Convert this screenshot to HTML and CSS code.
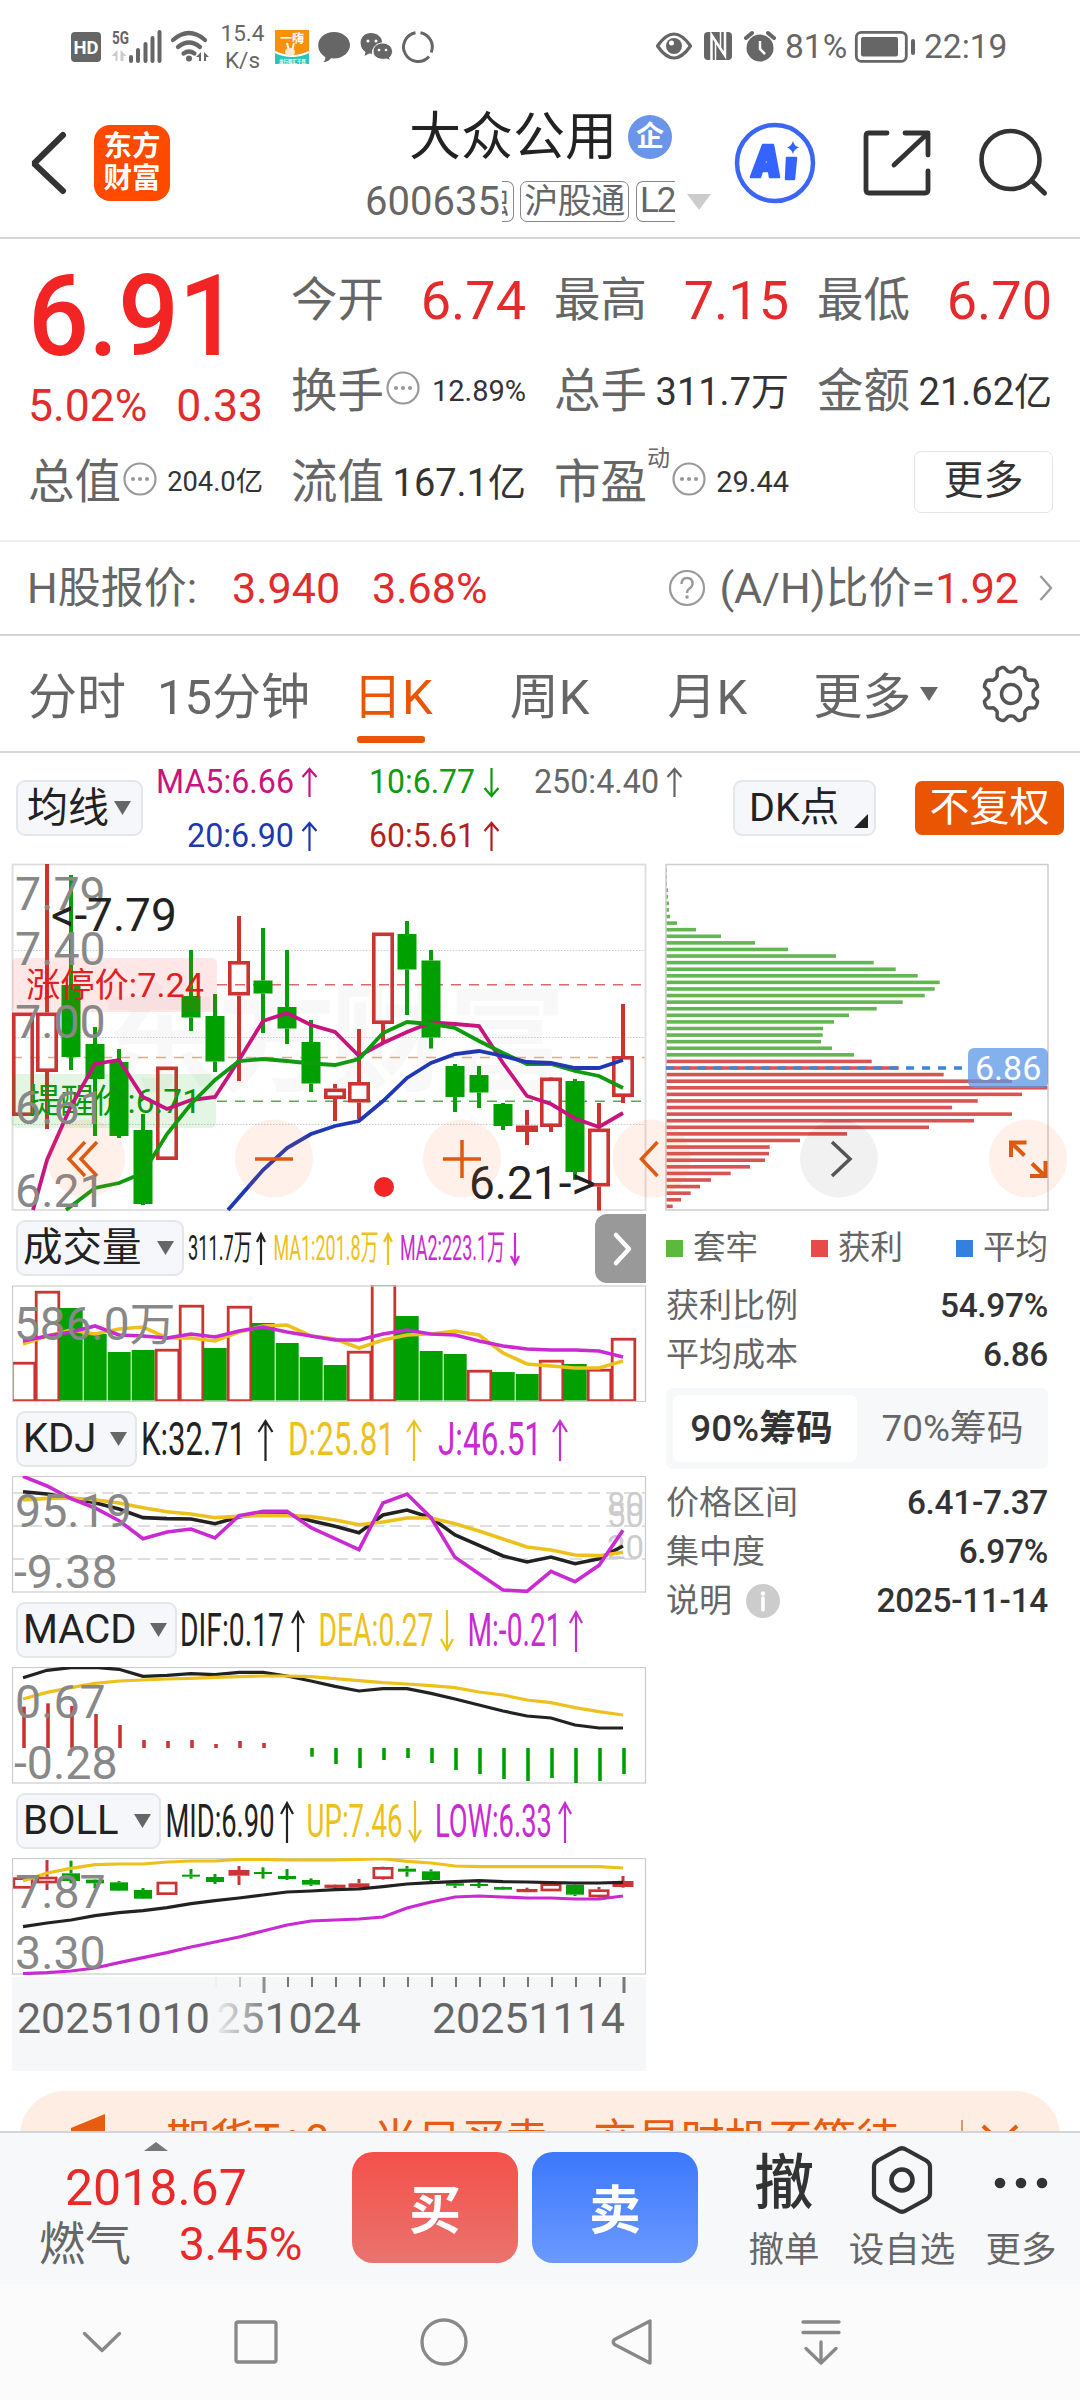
FILE: index.html
```html
<!DOCTYPE html>
<html lang="zh-CN">
<head>
<meta charset="utf-8">
<title>大众公用 600635</title>
<link rel="stylesheet" href="styles.css">
</head>
<body>
<div class="screen">

<div class="status">
  <svg class="st-left" width="144" height="40" viewBox="68 27 144 40">
    <rect x="71" y="32" width="30" height="30" rx="4" fill="#666"/>
    <text x="86" y="54" text-anchor="middle" font-size="19" font-weight="700" fill="#fff" textLength="25" lengthAdjust="spacingAndGlyphs">HD</text>
    <text x="112" y="44" font-size="18" font-weight="700" fill="#666" textLength="17" lengthAdjust="spacingAndGlyphs">5G</text>
    <path d="M117.500 50v11h-2v-5h-4zM120.500 61v-11l6 6h-3v5z" fill="#ccc"/>
    <path d="M131 57v4M138 50v11M145.500 44v17M152.500 38v23M159.500 32v29" stroke="#666" stroke-width="4" stroke-linecap="round"/>
    <path d="M173 40q16-14 32 0M178 47q11-9 22 0M183.500 53.500q5.500-4 11 0" fill="none" stroke="#666" stroke-width="4.200" stroke-linecap="round"/>
    <circle cx="189" cy="58.500" r="3" fill="#666"/>
    <path d="M201 52v9h-2v-4h-3zM204 61v-9l5 5h-3v4z" fill="#666"/>
  </svg>
  <div class="st-speed">15.4<br>K/s</div>
  <svg class="st-apps" width="164" height="40" viewBox="273 27 164 40">
    <rect x="275" y="30" width="34" height="34" fill="#f9900c"/>
    <path d="M275 53q17 7 34 0v11h-34z" fill="#2fc3bb"/>
    <path d="M275 52q17 8 34 0" fill="none" stroke="#fff" stroke-width="2"/>
    <path d="M287 43l2 8M294 43l-2 8" stroke="#fff" stroke-width="2"/>
    <ellipse cx="290" cy="52" rx="5" ry="4" fill="#ffe9d6"/>
    <text x="280" y="43" font-size="12" font-weight="700" fill="#fff">一嗨</text>
    <text x="279" y="62.500" font-size="4.500" font-weight="700" fill="#fff">龙行租汇千民</text>
    <path d="M334 32c9 0 16 6 16 13s-7 13.500-16 13.500l-3-.2c-2 2.500-4 3.700-7.500 3.700 1.500-1.500 2-3 1.700-5-4-2.500-7-6.500-7-11.500 0-8 7-13.500 15.800-13.500z" fill="#666"/>
    <path d="M371 33c6 0 11 4 11 9 0 1-.2 1.500-.4 2-5.600.4-9.600 4-9.600 8.500l.1 1.300-3-.4-4.600 2.600 1-4c-3-2-4.900-5-4.900-9 0-6 4.400-10 10.400-10z" fill="#666"/>
    <path d="M382.500 43c5.500 0 10 3.800 10 8.500 0 2.500-1 4.500-3 6l1 3-4-1.500c-6.500 1.500-13.500-1.500-13.500-7.500 0-4.700 4-8.500 9.500-8.500z" fill="#666" stroke="#fff" stroke-width="1"/>
    <g fill="#fff"><circle cx="368" cy="41" r="1.500"/><circle cx="376" cy="41" r="1.500"/><circle cx="379" cy="50" r="1.300"/><circle cx="386" cy="50" r="1.300"/></g>
    <g fill="none" stroke="#666" stroke-width="3"><path d="M415.500 32.700A14.500 14.500 0 1 0 429 56.500M431.200 52.500A14.500 14.500 0 0 0 420.500 32.700"/></g>
  </svg>
  <div class="st-right">
    <svg width="126" height="40" viewBox="653 27 126 40">
      <path d="M657.500 46q16.500-24 33 0q-16.500 24-33 0z" fill="none" stroke="#666" stroke-width="3.200" stroke-linejoin="round"/>
      <circle cx="674" cy="46" r="8" fill="#666"/><circle cx="671.500" cy="43" r="2.500" fill="#fff"/>
      <rect x="704" y="32" width="28" height="28" rx="4" fill="#666"/>
      <path d="M711.500 60v-25l13.500 20.500V32" fill="none" stroke="#fff" stroke-width="2.500"/>
      <path d="M715.500 61V41M720.500 31v17" stroke="#fff" stroke-width="1.500"/>
      <circle cx="760" cy="48" r="13.500" fill="#666"/>
      <path d="M760 41v8l5 5" stroke="#fff" stroke-width="2.500" fill="none"/>
      <path d="M746 38l6-5M774 38l-6-5" stroke="#666" stroke-width="4" stroke-linecap="round"/>
    </svg>
    <span class="st-pct">81%</span>
    <svg width="62" height="34" viewBox="854 30 62 34">
      <rect x="856.300" y="32.300" width="50" height="29" rx="5" fill="none" stroke="#666" stroke-width="2.800"/>
      <rect x="861" y="37" width="37" height="19.500" rx="2" fill="#666"/>
      <rect x="911" y="39" width="4" height="16" rx="2" fill="#666"/>
    </svg>
    <span class="st-time">22:19</span>
  </div>
</div>

<header class="topbar">
  <svg class="back" width="40" height="68" viewBox="30 129 40 68"><path d="M63 135L34 163.500 63 191" fill="none" stroke="#333" stroke-width="6" stroke-linejoin="bevel" stroke-linecap="round"/></svg>
  <div class="logo"><span>东方</span><span>财富</span></div>
  <div class="names">
    <div class="name">大众公用<span class="qi">企</span></div>
    <div class="code"><span class="digits">600635</span><span class="tag cut-l"><i>融</i></span><span class="tag mid">沪股通</span><span class="tag cut-r">L2</span><svg width="24" height="16"><path d="M0 0h24L12 16z" fill="#ccc"/></svg></div>
  </div>
  <svg class="actions" width="320" height="90" viewBox="732 118 320 90">
    <circle cx="775" cy="163" r="38" fill="none" stroke="#3b66f5" stroke-width="4.500"/>
    <path fill="#3563ff" stroke="#3563ff" stroke-width="2.500" stroke-linejoin="round" fill-rule="evenodd" d="M763 145h10l6 32h-9l-1-6h-7l-2 6h-9zM767 154l-3 10h4zM787 158h9l-2 21h-8z"/>
    <path d="M793 141q1 5 6 6.500q-5 1.500-6 6.500q-1.500-5-6-6.500q4.500-1.500 6-6.500z" fill="#3563ff"/>
    <path d="M887 133h-18q-3 0-3 3v54q0 3 3 3h56q3 0 3-3v-19M905 133h23v22M926 135L894 165" fill="none" stroke="#333" stroke-width="4.800" stroke-linecap="round" stroke-linejoin="round"/>
    <circle cx="1010.500" cy="160" r="29" fill="none" stroke="#333" stroke-width="4.600"/>
    <path d="M1032 181l12.500 12" stroke="#333" stroke-width="5" stroke-linecap="round"/>
  </svg>
</header>

<section class="quote">
  <div class="lead">
    <div class="price">6.91</div>
    <div class="chg"><span>5.02%</span><span>0.33</span></div>
  </div>
  <div class="cell"><b>今开</b><em>6.74</em></div>
  <div class="cell"><b>最高</b><em>7.15</em></div>
  <div class="cell"><b>最低</b><em>6.70</em></div>
  <div class="cell"><b>换手</b><svg class="dots" viewBox="0 0 36 36"><use href="#dots"/></svg><i class="sm">12.89%</i></div>
  <div class="cell"><b>总手</b><i>311.7万</i></div>
  <div class="cell"><b>金额</b><i>21.62亿</i></div>
  <div class="cell"><b>总值</b><svg class="dots" viewBox="0 0 36 36"><use href="#dots"/></svg><i class="sm xs">204.0亿</i></div>
  <div class="cell"><b>流值</b><i>167.1亿</i></div>
  <div class="cell"><b>市盈</b><sup>动</sup><svg class="dots" viewBox="0 0 36 36"><use href="#dots"/></svg><i class="sm">29.44</i></div>
  <div class="cell"><span class="more">更多</span></div>
</section>
<svg width="0" height="0" class="defs"><defs>
  <g id="dots"><circle cx="18" cy="18" r="15.500" fill="none" stroke="#999" stroke-width="2.200"/><g fill="#999"><circle cx="11" cy="18" r="2.100"/><circle cx="18" cy="18" r="2.100"/><circle cx="25" cy="18" r="2.100"/></g></g>
</defs></svg>

<section class="hshare">
  <span class="g">H股报价:</span><span class="r p1">3.940</span><span class="r p2">3.68%</span>
  <svg class="help" width="38" height="38"><circle cx="19" cy="19" r="17" fill="none" stroke="#999" stroke-width="2.200"/><path d="M13.500 15q0-6 5.500-6t5.500 5.500q0 3-3 5-2.500 1.700-2.500 4.500" fill="none" stroke="#999" stroke-width="2.400"/><circle cx="19" cy="28" r="1.800" fill="#999"/></svg>
  <span class="g">(A/H)比价=</span><span class="r">1.92</span>
  <svg class="chev" width="14" height="28"><path d="M1.500 2L12 14 1.500 26" fill="none" stroke="#999" stroke-width="2.400"/></svg>
</section>

<nav class="tabs">
  <span>分时</span><span>15分钟</span><span class="on">日K</span><span>周K</span><span>月K</span><span>更多</span>
  <svg class="tri" width="18" height="14"><path d="M0 0h18L9 14z" fill="#666"/></svg>
  <svg class="gear" width="62" height="62" viewBox="-31 -31 62 62"><path id="gearPath" fill="none" stroke="#555" stroke-width="3.500" stroke-linejoin="round"/><circle r="9.500" fill="none" stroke="#555" stroke-width="3.500"/></svg>
</nav>

<section class="mabar">
  <span class="drop ma">均线<svg width="17" height="14"><path d="M0 0h17L8.500 14z" fill="#666"/></svg></span>
  <svg class="malegend" width="560" height="110" viewBox="150 753 560 110" font-size="33.500">
    <g fill="#c8147f" stroke="#c8147f"><text x="156" y="793" textLength="138" lengthAdjust="spacingAndGlyphs">MA5:6.66</text><path class="ar" d="M309.500 797v-28m-7 8l7-8l7 8"/></g>
    <g fill="#0f9a0f" stroke="#0f9a0f"><text x="369" y="793" textLength="106" lengthAdjust="spacingAndGlyphs">10:6.77</text><path class="ar" d="M491.500 768v28m-7-8l7 8l7-8"/></g>
    <g fill="#666" stroke="#666"><text x="534" y="793" textLength="125" lengthAdjust="spacingAndGlyphs">250:4.40</text><path class="ar" d="M674.500 797v-28m-7 8l7-8l7 8"/></g>
    <g fill="#1f38ae" stroke="#1f38ae"><text x="187" y="847" textLength="107" lengthAdjust="spacingAndGlyphs">20:6.90</text><path class="ar" d="M309.500 851v-28m-7 8l7-8l7 8"/></g>
    <g fill="#b41e22" stroke="#b41e22"><text x="369" y="847" textLength="106" lengthAdjust="spacingAndGlyphs">60:5.61</text><path class="ar" d="M491.500 851v-28m-7 8l7-8l7 8"/></g>
  </svg>
  <span class="drop dk">DK点<svg width="14" height="14"><path d="M14 0v14H0z" fill="#222"/></svg></span>
  <span class="fq">不复权</span>
</section>

<main class="charts">
  <div class="left">
    <svg class="kline" width="635" height="350" viewBox="12 863 635 350">
      <g class="wm" font-size="118" font-weight="700" fill="#f8f8f8"><text x="100" y="1082">东方</text><text x="330" y="1082">财富</text></g>
      <g stroke="#ccc" stroke-width="1.200" stroke-dasharray="1.500 1.500"><path d="M12 950.500h633M12 1037.500h633M12 1124.500h633"/></g>
      <path d="M217 984.700h428" stroke="#d86a66" stroke-width="1.500" stroke-dasharray="10 8"/>
      <path d="M12 1057.400h633" stroke="#dcae7a" stroke-width="1.500" stroke-dasharray="10 8"/>
      <path d="M217 1101.200h428" stroke="#46b546" stroke-width="1.500" stroke-dasharray="10 8"/>
      <rect x="12.500" y="864.500" width="633" height="345.500" fill="none" stroke="#ddd" stroke-width="1.800"/>
      <g id="kcandles"></g>
      <rect x="12" y="958" width="205" height="54" rx="5" fill="#ff3c3c" opacity=".12"/>
      <rect x="12" y="1074" width="204" height="54" rx="5" fill="#0a0" opacity=".11"/>
      <g font-size="34"><text x="26" y="996.500" fill="#e02020" textLength="178" lengthAdjust="spacingAndGlyphs">涨停价:7.24</text><text x="27" y="1113" fill="#0d960d" textLength="174" lengthAdjust="spacingAndGlyphs">提醒价:6.71</text></g>
      <g id="klines" fill="none" stroke-width="3.800"></g>
      <g font-size="46.500" fill="#888"><text x="15" y="910">7.79</text><text x="15" y="964.500">7.40</text><text x="15" y="1037.500">7.00</text><text x="15" y="1124">6.61</text><text x="15" y="1207">6.21</text></g>
      <g font-size="46" fill="#222"><text x="51" y="931">&lt;-7.79</text><text x="469" y="1199">6.21-&gt;</text></g>
      <circle cx="384" cy="1187" r="10" fill="#f22424"/>
    </svg>

    <div class="ind">
      <span class="drop d1">成交量<svg width="17" height="14"><path d="M0 0h17L8.500 14z" fill="#666"/></svg></span>
      <svg class="leg" width="400" height="74" viewBox="184 1211 400 74" font-size="35">
        <g fill="#222" stroke="#222"><text x="188" y="1260" textLength="64" lengthAdjust="spacingAndGlyphs">311.7万</text><path class="ar" d="M261 1265v-31m-4 8l4-8l4 8"/></g>
        <g fill="#edc11d" stroke="#edc11d"><text x="273.500" y="1260" textLength="105" lengthAdjust="spacingAndGlyphs">MA1:201.8万</text><path class="ar" d="M388 1265v-31m-4 8l4-8l4 8"/></g>
        <g fill="#ca2ad2" stroke="#ca2ad2"><text x="400" y="1260" textLength="105" lengthAdjust="spacingAndGlyphs">MA2:223.1万</text><path class="ar" d="M515 1233v31m-4-8l4 8l4-8"/></g>
      </svg>
      <span class="next"><svg width="20" height="34"><path d="M3 3l13 14L3 31" fill="none" stroke="#fff" stroke-width="4.500" stroke-linecap="round" stroke-linejoin="round"/></svg></span>
    </div>
    <svg class="sub" width="635" height="117" viewBox="12 1285 635 117">
      <g id="vol"></g><rect x="12.500" y="1286" width="633" height="115.500" fill="none" stroke="#ccc" stroke-width="1.200"/>
      <g id="vlines" fill="none" stroke-width="3.600"></g>
      <text x="14" y="1340" font-size="46" fill="#888">586.0万</text>
    </svg>

    <div class="ind">
      <span class="drop d2">KDJ<svg width="17" height="14"><path d="M0 0h17L8.500 14z" fill="#666"/></svg></span>
      <svg class="leg" width="500" height="74" viewBox="136 1402 500 74" font-size="46">
        <g fill="#222" stroke="#222"><text x="140" y="1455" textLength="105" lengthAdjust="spacingAndGlyphs">K:32.71</text><path class="ar" d="M264.500 1461v-40m-7 11l7-11l7 11"/></g>
        <g fill="#edc11d" stroke="#edc11d"><text x="287" y="1455" textLength="107" lengthAdjust="spacingAndGlyphs">D:25.81</text><path class="ar" d="M413 1461v-40m-7 11l7-11l7 11"/></g>
        <g fill="#ca2ad2" stroke="#ca2ad2"><text x="437" y="1455" textLength="104" lengthAdjust="spacingAndGlyphs">J:46.51</text><path class="ar" d="M559 1461v-40m-7 11l7-11l7 11"/></g>
      </svg>
    </div>
    <svg class="sub" width="635" height="117" viewBox="12 1476 635 117">
      <path d="M12 1493h633M12 1526h633M12 1559h633" stroke="#d4d4d4" stroke-width="1.300" stroke-dasharray="12 6"/>
      <rect x="12.500" y="1476.500" width="633" height="115.500" fill="none" stroke="#ccc" stroke-width="1.200"/>
      <g font-size="33" fill="#ccc" text-anchor="end"><text x="644" y="1516">80</text><text x="644" y="1526.500">50</text><text x="644" y="1559">20</text></g>
      <g id="kdj" fill="none" stroke-width="3.600"></g>
      <g font-size="46.500" fill="#888"><text x="15" y="1527">95.19</text><text x="14" y="1587.500">-9.38</text></g>
    </svg>

    <div class="ind">
      <span class="drop d3">MACD<svg width="17" height="14"><path d="M0 0h17L8.500 14z" fill="#666"/></svg></span>
      <svg class="leg" width="440" height="74" viewBox="176 1593 440 74" font-size="46">
        <g fill="#222" stroke="#222"><text x="179" y="1645.500" textLength="104" lengthAdjust="spacingAndGlyphs">DIF:0.17</text><path class="ar" d="M297 1652v-40m-6 11l6-11l6 11"/></g>
        <g fill="#edc11d" stroke="#edc11d"><text x="317.500" y="1645.500" textLength="115" lengthAdjust="spacingAndGlyphs">DEA:0.27</text><path class="ar" d="M446 1610v40m-6-11l6 11l6-11"/></g>
        <g fill="#ca2ad2" stroke="#ca2ad2"><text x="466.500" y="1645.500" textLength="94" lengthAdjust="spacingAndGlyphs">M:-0.21</text><path class="ar" d="M575 1652v-40m-6 11l6-11l6 11"/></g>
      </svg>
    </div>
    <svg class="sub" width="635" height="117" viewBox="12 1667 635 117">
      <rect x="12.500" y="1667.500" width="633" height="115.500" fill="none" stroke="#ccc" stroke-width="1.200"/>
      <g id="macd" fill="none" stroke-width="3.200"></g>
      <g font-size="46.500" fill="#888"><text x="15" y="1718">0.67</text><text x="14" y="1779">-0.28</text></g>
    </svg>

    <div class="ind">
      <span class="drop d4">BOLL<svg width="17" height="14"><path d="M0 0h17L8.500 14z" fill="#666"/></svg></span>
      <svg class="leg" width="440" height="74" viewBox="160 1784 440 74" font-size="46">
        <g fill="#222" stroke="#222"><text x="164.500" y="1836.500" textLength="109" lengthAdjust="spacingAndGlyphs">MID:6.90</text><path class="ar" d="M286 1843v-40m-6 11l6-11l6 11"/></g>
        <g fill="#edc11d" stroke="#edc11d"><text x="305.500" y="1836.500" textLength="96" lengthAdjust="spacingAndGlyphs">UP:7.46</text><path class="ar" d="M414 1801v40m-6-11l6 11l6-11"/></g>
        <g fill="#ca2ad2" stroke="#ca2ad2"><text x="434" y="1836.500" textLength="117" lengthAdjust="spacingAndGlyphs">LOW:6.33</text><path class="ar" d="M564 1843v-40m-6 11l6-11l6 11"/></g>
      </svg>
    </div>
    <svg class="sub" width="635" height="117" viewBox="12 1858 635 117">
      <g id="bcandles"></g>
      <rect x="12.500" y="1858.500" width="633" height="115.500" fill="none" stroke="#ccc" stroke-width="1.200"/>
      <g id="boll" fill="none" stroke-width="3.200"></g>
      <g font-size="46.500" fill="#888"><text x="15" y="1908">7.87</text><text x="15" y="1969">3.30</text></g>
    </svg>

    <svg class="dates" width="634" height="94" viewBox="12 1977 634 94" font-size="42.500" fill="#666">
      <defs><linearGradient id="fade"><stop offset="0" stop-color="#f6f7f9"/><stop offset="1" stop-color="#f6f7f9" stop-opacity="0"/></linearGradient></defs>
      <rect x="12" y="1977" width="634" height="94" fill="#f6f7f9"/>
      <g id="ticks" stroke="#777"></g>
      <text x="168" y="2033" textLength="193" lengthAdjust="spacingAndGlyphs">20251024</text>
      <rect x="12" y="1977" width="201" height="94" fill="#f6f7f9"/>
      <rect x="212.500" y="1977" width="64" height="94" fill="url(#fade)"/>
      <text x="17" y="2033" textLength="193" lengthAdjust="spacingAndGlyphs">20251010</text>
      <text x="432" y="2033" textLength="193" lengthAdjust="spacingAndGlyphs">20251114</text>
    </svg>
  </div>

  <div class="right">
    <svg class="chips" width="384" height="348" viewBox="665 863 384 348">
      <g id="chipbars"></g>
      <rect x="666" y="864.500" width="382" height="345.500" fill="none" stroke="#ccc" stroke-width="1.500"/>
      <path d="M666 1068h297" stroke="#3f83dc" stroke-width="3.600" stroke-dasharray="8 8"/>
      <rect x="968" y="1048" width="80" height="40" rx="6" fill="#5b97e5" opacity=".75"/>
      <text x="975" y="1080" font-size="34" fill="#fff">6.86</text>
    </svg>
    <div class="legend"><span class="lg">套牢</span><span class="lr">获利</span><span class="lb">平均</span></div>
    <div class="kv"><span>获利比例</span><b>54.97%</b></div>
    <div class="kv"><span>平均成本</span><b>6.86</b></div>
    <div class="seg"><span class="act">90%<strong>筹码</strong></span><span>70%筹码</span></div>
    <div class="kv"><span>价格区间</span><b>6.41-7.37</b></div>
    <div class="kv"><span>集中度</span><b>6.97%</b></div>
    <div class="kv"><span>说明</span><svg width="34" height="34"><circle cx="17" cy="17" r="17" fill="#ccc"/><path d="M17 14v12" stroke="#fff" stroke-width="3.600" stroke-linecap="round"/><circle cx="17" cy="9.500" r="2.200" fill="#fff"/></svg><b>2025-11-14</b></div>
  </div>

  <svg class="tools" width="1080" height="84" viewBox="0 1117 1080 84" fill="none" stroke="#de5a12" stroke-width="3.500">
    <g fill="#ff6f26" fill-opacity=".1" stroke="none"><circle cx="86" cy="1158.500" r="39"/><circle cx="274" cy="1158.500" r="39"/><circle cx="462" cy="1158.500" r="39"/><circle cx="651.500" cy="1158.500" r="39"/><circle cx="1028" cy="1158.500" r="39"/></g>
    <circle cx="839" cy="1158.500" r="39" fill="#000" fill-opacity=".055" stroke="none"/>
    <path d="M85 1142l-16 17 16 17M97 1142l-16 17 16 17M255 1159h38M443 1159h38M462 1140v38M657.500 1142l-16 17 16 17"/>
    <path d="M832 1142l18 17-18 17" stroke="#555"/>
    <path d="M1011 1157v-14.500h15.500M1011.500 1143l13 12.500M1045.500 1161v15h-15.500M1045 1176l-13-12.500" stroke-width="4"/>
  </svg>
</main>

<div class="promo">
  <svg width="34" height="56"><path d="M34 0v50L0 24V14z" fill="#e65c10"/></svg>
  <span>期货T+0，当日买卖，交易时机不等待</span>
  <i></i>
  <svg class="px" width="38" height="36"><path d="M2 2l34 32M36 2L2 34" stroke="#e65c10" stroke-width="4"/></svg>
</div>

<footer class="trade">
  <div class="idx">
    <svg width="24" height="9"><path d="M12 0l12 9H0z" fill="#777"/></svg>
    <div class="i1">2018.67</div>
    <div class="i2"><span>燃气</span><b>3.45%</b></div>
  </div>
  <div class="btn buy">买</div>
  <div class="btn sell">卖</div>
  <div class="act che"><strong>撤</strong><span>撤单</span></div>
  <div class="act she"><svg width="66" height="70" viewBox="-33 -35 66 70"><path d="M-4-30.500q4-2.500 8 0L24-19.500q4 2.500 4 6v27q0 3.500-4 6L4 30.500q-4 2.500-8 0L-24 19.500q-4-2.500-4-6v-27q0-3.500 4-6z" fill="none" stroke="#333" stroke-width="4.200"/><circle r="10.500" fill="none" stroke="#333" stroke-width="4.600"/></svg><span>设自选</span></div>
  <div class="act mo"><svg width="60" height="70" viewBox="0 0 60 70"><g fill="#333"><circle cx="9" cy="38" r="5.300"/><circle cx="30" cy="38" r="5.300"/><circle cx="51" cy="38" r="5.300"/></g></svg><span>更多</span></div>
</footer>

<svg class="sysnav" width="1080" height="116" viewBox="0 2284 1080 116" fill="none" stroke="#888" stroke-width="3.300" stroke-linecap="round" stroke-linejoin="round">
  <path d="M84.500 2333.500l17.500 17 17.500-17"/>
  <rect x="236" y="2322" width="40" height="40" rx="2"/>
  <circle cx="444" cy="2342" r="22"/>
  <path d="M650 2321v42l-35.500-18.500q-2.500-2.500 0-5z"/>
  <path d="M803 2322h36M803 2332.500h36M821 2342v21M806 2348.500l15 14.500 15-14.500"/>
</svg>
</div>
<script src="charts.js"></script>
</body>
</html>
```
FILE: styles.css
```css
* { box-sizing: border-box; }
body { margin: 0; background: #fff; }
.screen { width: 1080px; height: 2400px; overflow: hidden; position: relative; font-family: Roboto, "Noto Sans CJK SC", sans-serif; color: #666; line-height: 1; }
svg { display: block; flex: none; overflow: visible; }
svg text { stroke: none; }
i, em { font-style: normal; }
.ar { fill: none; stroke-width: 2.2; }
.defs { position: absolute; }

.status { height: 94px; display: flex; align-items: center; padding-left: 68px; }
.st-speed { width: 61px; text-align: center; font-size: 22.5px; line-height: 27px; }
.st-right { margin-left: 216px; display: flex; align-items: center; font-size: 33.5px; }
.st-pct { margin-left: 6px; width: 69px; }
.st-time { margin-left: 8px; }

.topbar { height: 145px; border-bottom: 2px solid #d6d6d6; display: flex; position: relative; padding-left: 30px; }
.back { margin-top: 35px; }
.logo { width: 76px; height: 76px; margin: 31px 0 0 24px; border-radius: 16px; background: #ff4a00; color: #fff; font-weight: 700; font-size: 28.5px; line-height: 32px; display: flex; flex-direction: column; align-items: center; padding-top: 6px; }
.names { margin-left: 195px; width: 350px; padding-top: 12px; }
.name { height: 64px; padding-left: 44px; display: flex; align-items: center; font-size: 52px; color: #222; }
.qi { width: 44px; height: 44px; margin: -3px 0 0 11px; border-radius: 50%; background: #6b95e8; color: #fff; font-size: 28px; font-weight: 700; display: flex; align-items: center; justify-content: center; }
.code { height: 60px; display: flex; align-items: center; font-size: 40px; padding-top: 4px; }
.digits { width: 137px; }
.tag { height: 41px; border: 1.5px solid #888; border-radius: 7px; font-size: 34px; line-height: 38px; text-align: center; overflow: hidden; margin-top: -2px; }
.cut-l { width: 12px; border-left: 0; border-radius: 0 7px 7px 0; display: flex; justify-content: flex-end; padding-right: 4px; }
.mid { width: 109px; margin-left: 6px; letter-spacing: -.5px; }
.cut-r { width: 39px; margin-left: 7px; margin-right: 12px; border-right: 0; border-radius: 7px 0 0 7px; font-size: 35px; text-align: left; padding-left: 3px; letter-spacing: -2px; }
.actions { margin: 24px 0 0 17px; }

.quote { height: 303px; padding: 17px 32px 13px 28px; display: grid; grid-template-columns: repeat(4, 233px); grid-auto-rows: 91px; column-gap: 30px; border-bottom: 2px solid #eee; }
.lead { grid-row: span 2; }
.price { height: 120px; font-size: 113px; line-height: 122px; font-weight: 500; color: #f22424; transform: scaleX(.95); transform-origin: 0 0; letter-spacing: -.5px; }
.chg { display: flex; justify-content: space-between; font-size: 44.5px; line-height: 60px; color: #e02c2c; margin: 0 -2px 0 0; }
.cell { display: flex; align-items: center; justify-content: space-between; white-space: nowrap; margin-top: -2px; }
.cell b { font-weight: 400; font-size: 46.5px; }
.cell em { font-size: 54px; color: #e42a2a; margin-right: -2px; }
.cell i { font-size: 38px; color: #333; margin-right: -2px; }
.cell .sm { font-size: 29px; margin-left: auto; }
.cell .xs { font-size: 27.3px; }
.dots { width: 36px; height: 36px; margin: -8px 0 0 1px; }
.cell sup { font-size: 23px; align-self: flex-start; margin-top: 11px; }
.more { margin: -2px -3px 0 auto; width: 139px; height: 62px; border: 1.5px solid #e4e4e4; border-radius: 7px; font-size: 40px; line-height: 58px; text-align: center; color: #333; }

.hshare { height: 94px; border-bottom: 2px solid #d4d4d4; display: flex; align-items: center; padding-left: 27px; font-size: 43px; }
.hshare .g { font-size: 43px; }
.hshare .r { color: #e02c2c; }
.p1 { margin-left: 35px; }
.p2 { margin-left: 32px; }
.help { margin: 0 13px 0 auto; }
.chev { margin: 0 27px 0 20px; }

.tabs { height: 117px; border-bottom: 2px solid #d8d8d8; position: relative; display: flex; align-items: center; padding-left: 28px; font-size: 49px; }
.tabs span { height: 115px; line-height: 124px; white-space: nowrap; }
.tabs span:nth-child(2) { margin-left: 31px; }
.tabs span:nth-child(3) { margin-left: 43px; }
.tabs span:nth-child(4) { margin-left: 77px; }
.tabs span:nth-child(5) { margin-left: 78px; }
.tabs span:nth-child(6) { margin-left: 66px; }
.tabs .on { color: #e85505; position: relative; }
.tabs .on::after { content: ""; position: absolute; left: 4px; top: 100px; width: 68px; height: 7px; border-radius: 3px; background: #e85505; }
.tri { margin-left: 9px; }
.gear { position: absolute; left: 980px; top: 27px; }

.mabar { height: 110px; display: flex; align-items: flex-start; }
.drop { height: 56px; border: 2px solid #e4e6eb; border-radius: 9px; background: #f6f7fa; color: #222; font-size: 40px; display: flex; align-items: center; white-space: nowrap; flex: none; }
.ma { width: 127px; margin: 27px 7px 0 16px; padding-left: 9px; font-size: 41px; }
.ma svg { margin-left: 5px; }
.dk { width: 143px; margin: 27px 0 0 23px; padding-left: 14px; font-size: 39.5px; position: relative; }
.dk svg { position: absolute; right: 6px; bottom: 6px; }
.fq { width: 149px; height: 54px; margin: 28px 0 0 39px; border-radius: 7px; background: #ea5504; color: #fff; font-size: 40px; line-height: 53px; text-align: center; }

.charts { height: 1228px; display: flex; position: relative; }
.left { width: 635px; margin-left: 12px; flex: none; }
.kline { margin-bottom: -2px; }
.ind { height: 74px; display: flex; align-items: flex-start; position: relative; padding-left: 4px; }
.ind .drop { margin-top: 9px; padding: 0 8px 0 5px; justify-content: space-between; }
.d1 { width: 168px; font-size: 39.5px; }
.d2 { width: 121px; }
.d3 { width: 161px; }
.d4 { width: 145px; }
.next { position: absolute; right: 1px; top: 3px; width: 51px; height: 69px; border-radius: 12px 0 0 12px; background: #999; display: flex; align-items: center; padding-left: 18px; }
.sub { overflow: hidden; }
.dates { margin-top: 2px; }

.right { width: 384px; margin-left: 18px; }
.legend { height: 70px; margin: 0 1px; display: flex; justify-content: space-between; align-items: center; font-size: 32.5px; padding-top: 5px; }
.legend span { display: flex; align-items: center; gap: 10px; }
.legend span::before { content: ""; width: 17px; height: 17px; background: #5cb83f; }
.legend .lr::before { background: #e84a4a; }
.legend .lb::before { background: #3480e0; }
.kv { height: 49.3px; display: flex; align-items: center; font-size: 33px; padding: 0 1px; }
.kv b { margin-left: auto; font-size: 33.4px; font-weight: 500; color: #333; letter-spacing: -.3px; }
.kv svg { margin-left: 14px; }
.seg { height: 81px; margin: 8px 1px 9px; border-radius: 7px; background: #f7f8fa; display: grid; grid-template-columns: 184px 1fr; padding: 7px 0 7px 7px; font-size: 36.8px; line-height: 67px; text-align: center; }
.seg .act { background: #fff; border-radius: 7px; color: #333; font-weight: 500; padding-right: 7px; }
.tools { position: absolute; left: 0; top: 254px; }

.promo { position: absolute; left: 20px; top: 2091px; width: 1040px; height: 102px; border-radius: 45px; background: #fdede3; color: #e65c10; font-size: 43.900px; display: flex; align-items: center; padding-left: 51px; white-space: nowrap; }
.promo span { margin-left: 61px; width: 742px; }
.promo i { width: 2px; height: 44px; background: #e0976a; margin: 0 18px 0 53px; }

.trade { position: absolute; left: 0; top: 2131px; width: 1080px; height: 153px; border-top: 2px solid #d2d4d8; background: #f7f8fa; display: flex; }
.idx { width: 352px; }
.idx svg { margin: 9px 0 0 144px; }
.i1 { font-size: 50px; line-height: 60px; margin: 7px 0 0 65px; color: #ea2828; }
.i2 { display: flex; font-size: 46px; line-height: 50px; padding: 1px 0 0 39px; }
.i2 b { font-weight: 400; color: #ea2828; margin-left: 48px; }
.btn { width: 166px; height: 111px; margin-top: 19px; border-radius: 21px; color: #fff; font-size: 52px; font-weight: 700; line-height: 119px; text-align: center; }
.buy { background: linear-gradient(#f4504a, #ea736e); }
.sell { margin-left: 14px; background: linear-gradient(#3c78fb, #6b99ff); }
.trade .act { display: flex; flex-direction: column; align-items: center; padding-top: 12px; font-size: 35.5px; }
.trade .act span { line-height: 48px; margin-top: 11px; white-space: nowrap; }
.act strong { height: 70px; font-size: 60px; line-height: 78px; font-weight: 500; color: #333; }
.seg .act strong { font-size: inherit; line-height: inherit; font-weight: 700; }
.che { width: 80px; margin-left: 46px; }
.she { width: 114px; margin-left: 21px; }
.mo { width: 80px; margin-left: 22px; }
.sysnav { position: absolute; left: 0; top: 2284px; background: #fbfbfb; }
```
FILE: charts.js
```js
const NS = 'http://www.w3.org/2000/svg';
const GREEN = '#00a000', RED = '#cc3333', BLACK = '#222', GOLD = '#edc11d', PINK = '#ca2ad2';
const byId = id => document.getElementById(id);
function add(parent, tag, attrs) {
  const el = document.createElementNS(NS, tag);
  for (const k in attrs) el.setAttribute(k, attrs[k]);
  parent.appendChild(el);
}
const cx = i => 23 + 24 * i;
function line(parent, ys, color, map = y => y, lead = '', start = 0) {
  add(parent, 'polyline', { points: lead + ys.map((y, i) => `${cx(i + start)},${map(y)}`).join(' '), stroke: color });
}

// direction, high, low, body top, body bottom
function candles(parent, rows, w, sw, map = y => y) {
  rows.forEach(([dir, hi, lo, top, bot], i) => {
    [hi, lo, top, bot] = [hi, lo, top, bot].map(map);
    const x = cx(i), color = dir === 'r' ? RED : GREEN;
    if (hi < top) add(parent, 'path', { d: `M${x} ${hi}V${top}`, stroke: color, 'stroke-width': sw });
    if (lo > bot) add(parent, 'path', { d: `M${x} ${bot}V${lo}`, stroke: color, 'stroke-width': sw });
    if (dir === 'g') add(parent, 'rect', { x: x - w / 2, y: top, width: w, height: bot - top, fill: GREEN });
    else {
      const s = sw * 0.9;
      add(parent, 'rect', { x: x - w / 2 - 1.5 + s / 2, y: top + s / 2, width: w + 3 - s, height: Math.max(bot - top - s, 0.5), fill: bot - top < 2.4 * s ? RED : 'none', stroke: RED, 'stroke-width': s });
    }
  });
}

candles(byId('kcandles'), [
  ['r',1012.5,1116,1012.5,1116],['r',864,1129,1012.5,1072],['g',875,1070,985,1057],['g',1027,1136,1044,1079],
  ['g',1049,1138,1062,1136],['g',1114,1205,1130,1204],['r',1066.5,1160,1066.5,1160],['g',950,1031,996,1017.5],
  ['g',994,1072,1016,1061.5],['r',916,1081,961,995.5],['g',928,1033,980.5,993.5],['g',950,1044,1007,1028.5],
  ['g',1020,1092,1042,1083.5],['r',1084,1121,1088.5,1099],['r',1029,1119,1082,1102.5],['r',932.5,1042,932.5,1024],
  ['g',921,1015,934,969.5],['g',950,1048.5,960.5,1037.5],['g',1064,1112,1066,1097],['g',1066,1108,1075,1092.5],
  ['g',1103,1130,1104,1126],['r',1110,1145,1125.5,1132],['r',1077,1132,1077.5,1127],['g',1079,1180,1081,1172],
  ['r',1103,1210.5,1128.5,1186.5],['r',1004,1103,1056,1097]
], 19, 4);

const kl = byId('klines');
line(kl, [1160,1106,1064,1060,1097,1109,1100,1097,1060,1021,1013,1025,1032,1056,1043,1032,1022.5,1024,1026,1063,1096,1104,1118.5,1127,1113], '#c8147f', undefined, '33,1210 ', 1);
line(kl, [1188,1183,1173,1134,1104,1080,1061,1059,1061,1063.5,1065,1059,1033,1022,1024,1028,1041,1053,1064,1064,1071,1076,1088], '#0f9a0f', undefined, '66,1210 ', 3);
line(kl, [1170,1148,1134,1126,1121,1101,1078,1063,1054,1051,1056,1062,1063,1068,1068,1060], '#2038b4', undefined, '228,1210 ', 10);

const third = base => y => base + y / 3;

const vol = byId('vol');
[['r',1362],['r',1291],['g',1308],['g',1334],['g',1352],['g',1350],['r',1349],['r',1305],['g',1348],['r',1306],['g',1323],['g',1343],['g',1357],['g',1365],['r',1351],['r',1283],['g',1316],['g',1351],['g',1354],['r',1370],['g',1372],['g',1374],['r',1360],['g',1364],['r',1369],['r',1338]].forEach(([d, y], i) => {
  const x = cx(i);
  if (d === 'g') add(vol, 'rect', { x: x - 11.3, y, width: 23, height: 1400.5 - y, fill: GREEN });
  else add(vol, 'rect', { x: x - 10.8, y: y + 1.2, width: 22.6, height: 1399.5 - y, fill: '#fff', stroke: RED, 'stroke-width': 2.8 });
});
line(byId('vlines'), [1344,1336,1330,1334,1329,1327,1338,1338,1341,1332,1326,1325,1336,1339,1348,1340,1335,1334,1331,1335,1353,1364,1366,1368,1368,1361], GOLD);
line(byId('vlines'), [1341,1336,1332,1326,1335,1336,1338,1334,1337,1331,1327,1332,1336,1340,1340,1334,1330,1334,1335,1341,1346,1349,1350,1350,1351,1357], PINK);

const k = byId('kdj');
line(k, [845,852,864,878,897,923,926,927,941,921,909,911,932,949,968,915,900,923,975,1006,1038,1056,1041,1061,1046,1008], BLACK, third(1210));
line(k, [870,865,864,869,879,893,905,912,923,919,916,917,920,930,944,936,924,924,941,963,987,1011,1020,1035,1037,1027], GOLD, third(1210));
line(k, [799,828,866,894,932,986,966,957,984,917,904,904,953,986,1019,879,852,923,1042,1091,1140,1144,1084,1115,1066,961], PINK, third(1210));

const m = byId('macd');
[350,340,348,372,405,450,453,450,462,453,459,474,500,522,534,510,504,519,540,552,567,573,564,579,573,552].forEach((y, i) => {
  if (y !== 474) add(m, 'path', { d: `M${cx(i) + 1} 1748V${1590 + y / 3}`, stroke: y < 474 ? RED : GREEN, 'stroke-width': 3.6 });
});
line(m, [263,241,233,232,238,259,256,251,254,247,247,258,273,289,303,296,296,310,327,345,363,378,384,405,414,414], BLACK, third(1590));
line(m, [327,307,293,280,273,270,267,265,262,260,258,258,260,266,272,278,282,287,293,306,315,330,338,353,365,375], GOLD, third(1590));

candles(byId('bcandles'), [
  ['r',862,896,862,896],['r',810,900,860,880],['g',812,880,850,873],['g',868,895,869,880],['g',873,903,877,902],['g',894,927,900,926],
  ['r',875,915,875,915],['g',837,866,854,860],['g',852,882,861,876],['r',828,885,840,857],['g',832,866,846,852],['g',837,870,858,867],
  ['g',865,888,870,884],['r',883,896,884,891],['r',867,897,880,893],['r',830,869,831,867],['g',828,860,836,845],['g',838,873,844,870],
  ['g',876,894,880,887],['g',876,894,882,888],['g',890,900,891,899],['r',893,906,897,904],['r',880,904,880,904],['g',883,918,884,914],
  ['r',891,925,898,922],['r',858,893,873,891]
], 18, 3, third(1590));
const b = byId('boll');
line(b, [873,849,835,824,822,822,816,813,813,808,808,810,810,810,808,806,814,819,828,830,830,830,830,830,830,834], GOLD, third(1590));
line(b, [1010,999,990,977,968,962,953,941,932,924,915,906,903,899,897,890,882,878,875,872,875,876,878,879,879,877], BLACK, third(1590));
line(b, [1151,1148,1143,1134,1118,1103,1088,1071,1056,1041,1023,1005,993,990,987,981,954,936,921,918,921,924,924,927,927,918], PINK, third(1590));

for (let i = 8; i < 26; i++) {
  const big = i === 10 || i === 25;
  add(byId('ticks'), 'path', { d: `M${cx(i) + 1} 1977v${big ? 16 : 10}`, 'stroke-width': big ? 3 : 2 });
}

[1,1,1,2,2,3,3,4,11,30,55,89,122,170,207.7,229.7,251.7,273.7,268.7,258.7,236.7,210.7,183,168,157,156.7,155,166,188,
 205.7,232.7,277.7,346,382,356,311.7,286,346,308,263,181,134,103.7,103,99,84,64.7,45,34,24.7,15,6.7].forEach((w, i) => {
  add(byId('chipbars'), 'rect', { x: 666, y: 868.6 + i * 6.587, width: w, height: 3.6, fill: i < 29 ? '#64b653' : '#d65452' });
});

// eight-lobed cog outline
let d = '';
for (let i = 0; i <= 96; i++) {
  const a = i / 96 * Math.PI * 2, r = 25 + 3 * Math.tanh(2.2 * Math.cos(8 * a + Math.PI));
  d += `${i ? 'L' : 'M'}${(r * Math.cos(a)).toFixed(1)} ${(r * Math.sin(a)).toFixed(1)}`;
}
byId('gearPath').setAttribute('d', d + 'z');
```
